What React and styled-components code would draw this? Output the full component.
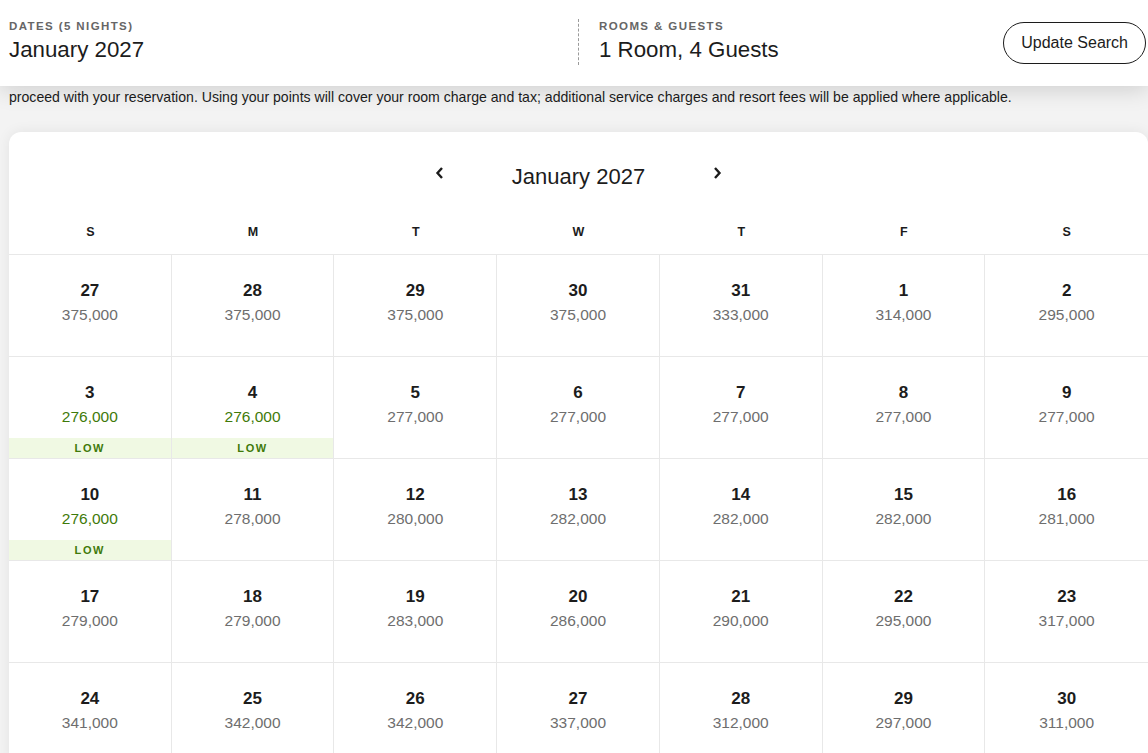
import React from "react";
import styled, { createGlobalStyle } from "styled-components";

const GlobalStyle = createGlobalStyle`
    html, body {
        margin: 0;
        padding: 0;
        background: #f3f3f3;
        overflow: hidden;
        font-family: "Liberation Sans", Arial, sans-serif;
        color: #1c1c1c;
    }
    * { box-sizing: border-box; }
`;

const SearchBar = styled.header`
    position: relative;
    z-index: 2;
    height: 86px;
    background: #fff;
    display: flex;
    align-items: flex-start;
    padding-left: 9px;
    box-shadow: 0 3px 22px rgba(0, 0, 0, 0.16);
`;

const Field = styled.div`
    display: flex;
    flex-direction: column;
    width: ${(p) => p.width || "auto"};
    flex: ${(p) => (p.grow ? 1 : "none")};
    height: 46px;
    margin-top: 19px;
    padding-left: ${(p) => (p.divided ? "20px" : "0")};
    border-left: ${(p) => (p.divided ? "1px dashed #9a9a9a" : "none")};
`;

const FieldLabel = styled.div`
    font-size: 11.5px;
    font-weight: 600;
    letter-spacing: 1.4px;
    color: #666;
    line-height: 14px;
`;

const FieldValue = styled.div`
    font-size: 22.3px;
    line-height: 26px;
    margin-top: 4px;
    color: #1c1c1c;
`;

const UpdateButton = styled.button`
    height: 42px;
    padding: 0 17px;
    margin: 22px 2px 0 0;
    border: 1px solid #1c1c1c;
    border-radius: 21px;
    background: #fff;
    font-family: inherit;
    font-size: 16px;
    color: #1c1c1c;
`;

const Notice = styled.p`
    margin: 0;
    padding: 4px 0 0 9px;
    font-size: 14.1px;
    line-height: 14px;
    color: #1c1c1c;
    white-space: nowrap;
`;

const Card = styled.section`
    margin: 28px 0 0 9px;
    width: 1139px;
    background: #fff;
    border-radius: 12px;
    box-shadow: 0 0 14px rgba(0, 0, 0, 0.07);
    overflow: hidden;
`;

const MonthNav = styled.div`
    display: flex;
    justify-content: center;
    align-items: center;
    gap: 60px;
    padding-top: 18px;
    height: 71px;
`;

const NavButton = styled.span`
    display: flex;
    width: 24px;
    height: 28px;
    align-items: center;
    justify-content: center;
    transform: translateY(-4px);
`;

const MonthTitle = styled.h2`
    margin: 0;
    font-size: 22px;
    line-height: 28px;
    font-weight: 400;
    color: #1c1c1c;
`;

const Grid = styled.div`
    display: grid;
    grid-template-columns: repeat(7, 1fr);
`;

const WeekDay = styled.div`
    height: 52px;
    display: flex;
    align-items: flex-end;
    justify-content: center;
    padding-bottom: 15px;
    font-size: 12.5px;
    line-height: 14px;
    font-weight: 600;
    color: #1c1c1c;
    border-bottom: 1px solid #e8e8e8;
`;

const DayCell = styled.div`
    height: 102px;
    display: flex;
    flex-direction: column;
    align-items: center;
    padding-top: 26px;
    border-right: ${(p) => (p.last ? "none" : "1px solid #e8e8e8")};
    border-bottom: 1px solid #e8e8e8;
`;

const DayNum = styled.div`
    font-size: 17px;
    line-height: 20px;
    font-weight: 600;
    color: #1c1c1c;
`;

const Price = styled.div`
    margin-top: 4px;
    font-size: 15.5px;
    line-height: 20px;
    color: ${(p) => (p.low ? "#3f7a0a" : "#6e6e6e")};
`;

const LowBand = styled.div`
    margin-top: auto;
    width: 100%;
    height: 20px;
    background: #f0f9e3;
    color: #3f7a0a;
    font-size: 11px;
    font-weight: 700;
    letter-spacing: 1.6px;
    display: flex;
    align-items: center;
    justify-content: center;
`;

const Chevron = ({ dir }) => (
    <svg width="10" height="14" viewBox="0 0 10 14">
        <polyline
            points={dir === "left" ? "7,2 2.5,7 7,12" : "3,2 7.5,7 3,12"}
            fill="none"
            stroke="#1c1c1c"
            strokeWidth="2.4"
        />
    </svg>
);

const weekdays = ["S", "M", "T", "W", "T", "F", "S"];

const days = [
    [27, "375,000"], [28, "375,000"], [29, "375,000"], [30, "375,000"], [31, "333,000"], [1, "314,000"], [2, "295,000"],
    [3, "276,000", true], [4, "276,000", true], [5, "277,000"], [6, "277,000"], [7, "277,000"], [8, "277,000"], [9, "277,000"],
    [10, "276,000", true], [11, "278,000"], [12, "280,000"], [13, "282,000"], [14, "282,000"], [15, "282,000"], [16, "281,000"],
    [17, "279,000"], [18, "279,000"], [19, "283,000"], [20, "286,000"], [21, "290,000"], [22, "295,000"], [23, "317,000"],
    [24, "341,000"], [25, "342,000"], [26, "342,000"], [27, "337,000"], [28, "312,000"], [29, "297,000"], [30, "311,000"],
];

const App = () => {
    return (
        <>
            <GlobalStyle />
            <SearchBar>
                <Field width="569px">
                    <FieldLabel>DATES (5 NIGHTS)</FieldLabel>
                    <FieldValue>January 2027</FieldValue>
                </Field>
                <Field divided grow>
                    <FieldLabel>ROOMS &amp; GUESTS</FieldLabel>
                    <FieldValue>1 Room, 4 Guests</FieldValue>
                </Field>
                <UpdateButton>Update Search</UpdateButton>
            </SearchBar>
            <Notice>
                proceed with your reservation. Using your points will cover your room charge and tax; additional service charges and resort fees will be applied where applicable.
            </Notice>
            <Card>
                <MonthNav>
                    <NavButton><Chevron dir="left" /></NavButton>
                    <MonthTitle>January 2027</MonthTitle>
                    <NavButton><Chevron dir="right" /></NavButton>
                </MonthNav>
                <Grid>
                    {weekdays.map((d, i) => (
                        <WeekDay key={i}>{d}</WeekDay>
                    ))}
                    {days.map(([n, price, low], i) => (
                        <DayCell key={i} last={i % 7 === 6}>
                            <DayNum>{n}</DayNum>
                            <Price low={low}>{price}</Price>
                            {low && <LowBand>LOW</LowBand>}
                        </DayCell>
                    ))}
                </Grid>
            </Card>
        </>
    );
};

export default App;
